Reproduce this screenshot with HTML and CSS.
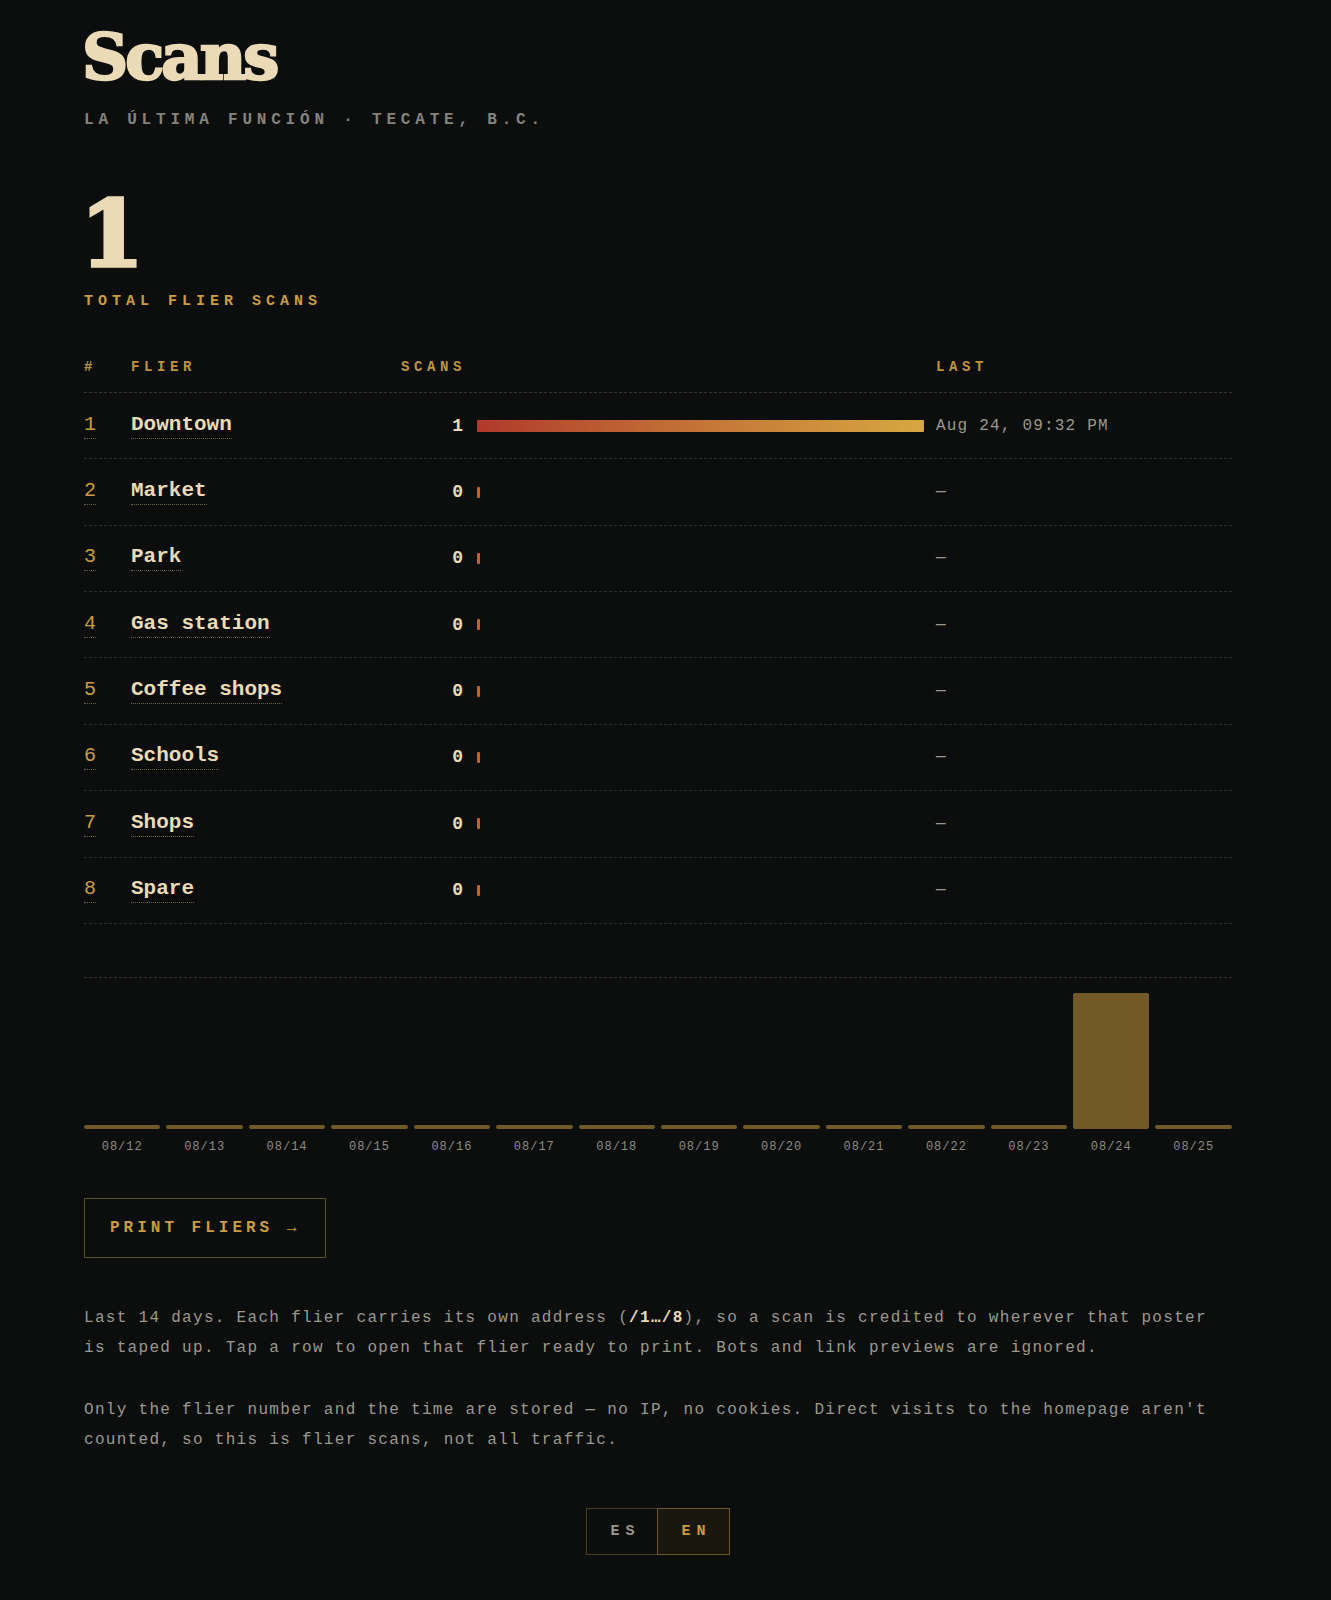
FILE: index.html
```html
<!DOCTYPE html>
<html lang="en">
<head>
<meta charset="utf-8">
<title>Scans</title>
<link rel="stylesheet" href="styles.css">
</head>
<body>
<main class="page">
  <h1 class="title">Scans</h1>
  <p class="subtitle">LA ÚLTIMA FUNCIÓN · TECATE, B.C.</p>

  <section class="total">
    <div class="total-num">1</div>
    <div class="total-label">TOTAL FLIER SCANS</div>
  </section>

  <section class="table">
    <div class="thead">
      <div>#</div>
      <div>FLIER</div>
      <div class="th-scans">SCANS</div>
      <div>LAST</div>
    </div>

    <div class="row">
      <div><span class="idx">1</span></div>
      <div><span class="name">Downtown</span></div>
      <div class="count">1</div>
      <div class="bar-cell"><div class="bar" style="width:100%"></div></div>
      <div class="last">Aug 24, 09:32 PM</div>
    </div>
    <div class="row">
      <div><span class="idx">2</span></div>
      <div><span class="name">Market</span></div>
      <div class="count">0</div>
      <div class="bar-cell"><div class="bar zero"></div></div>
      <div class="last">—</div>
    </div>
    <div class="row">
      <div><span class="idx">3</span></div>
      <div><span class="name">Park</span></div>
      <div class="count">0</div>
      <div class="bar-cell"><div class="bar zero"></div></div>
      <div class="last">—</div>
    </div>
    <div class="row">
      <div><span class="idx">4</span></div>
      <div><span class="name">Gas station</span></div>
      <div class="count">0</div>
      <div class="bar-cell"><div class="bar zero"></div></div>
      <div class="last">—</div>
    </div>
    <div class="row">
      <div><span class="idx">5</span></div>
      <div><span class="name">Coffee shops</span></div>
      <div class="count">0</div>
      <div class="bar-cell"><div class="bar zero"></div></div>
      <div class="last">—</div>
    </div>
    <div class="row">
      <div><span class="idx">6</span></div>
      <div><span class="name">Schools</span></div>
      <div class="count">0</div>
      <div class="bar-cell"><div class="bar zero"></div></div>
      <div class="last">—</div>
    </div>
    <div class="row">
      <div><span class="idx">7</span></div>
      <div><span class="name">Shops</span></div>
      <div class="count">0</div>
      <div class="bar-cell"><div class="bar zero"></div></div>
      <div class="last">—</div>
    </div>
    <div class="row">
      <div><span class="idx">8</span></div>
      <div><span class="name">Spare</span></div>
      <div class="count">0</div>
      <div class="bar-cell"><div class="bar zero"></div></div>
      <div class="last">—</div>
    </div>
  </section>

  <section class="chart">
    <div class="day"><div class="day-area"><div class="day-bar"></div></div><div class="day-label">08/12</div></div>
    <div class="day"><div class="day-area"><div class="day-bar"></div></div><div class="day-label">08/13</div></div>
    <div class="day"><div class="day-area"><div class="day-bar"></div></div><div class="day-label">08/14</div></div>
    <div class="day"><div class="day-area"><div class="day-bar"></div></div><div class="day-label">08/15</div></div>
    <div class="day"><div class="day-area"><div class="day-bar"></div></div><div class="day-label">08/16</div></div>
    <div class="day"><div class="day-area"><div class="day-bar"></div></div><div class="day-label">08/17</div></div>
    <div class="day"><div class="day-area"><div class="day-bar"></div></div><div class="day-label">08/18</div></div>
    <div class="day"><div class="day-area"><div class="day-bar"></div></div><div class="day-label">08/19</div></div>
    <div class="day"><div class="day-area"><div class="day-bar"></div></div><div class="day-label">08/20</div></div>
    <div class="day"><div class="day-area"><div class="day-bar"></div></div><div class="day-label">08/21</div></div>
    <div class="day"><div class="day-area"><div class="day-bar"></div></div><div class="day-label">08/22</div></div>
    <div class="day"><div class="day-area"><div class="day-bar"></div></div><div class="day-label">08/23</div></div>
    <div class="day"><div class="day-area"><div class="day-bar" style="height:100%"></div></div><div class="day-label">08/24</div></div>
    <div class="day"><div class="day-area"><div class="day-bar"></div></div><div class="day-label">08/25</div></div>
  </section>

  <a class="print-btn" href="#">PRINT FLIERS →</a>

  <p class="note note-first">Last 14 days. Each flier carries its own address (<b class="path">/1…/8</b>), so a scan is credited to wherever that poster is taped up. Tap a row to open that flier ready to print. Bots and link previews are ignored.</p>
  <p class="note">Only the flier number and the time are stored — no IP, no cookies. Direct visits to the homepage aren't counted, so this is flier scans, not all traffic.</p>

  <div class="lang-wrap">
    <div class="lang">
      <span class="lang-btn">ES</span>
      <span class="lang-btn active">EN</span>
    </div>
  </div>
</main>
</body>
</html>
```

FILE: styles.css
```css
* { box-sizing: border-box; }

html, body {
  margin: 0;
  background: #0c0e0d;
}

body {
  padding: 25px 15px 40px 0;
  font-family: "Liberation Mono", "DejaVu Sans Mono", monospace;
  color: #9b988f;
}

.page {
  width: 1148px;
  margin: 0 auto;
}

.title {
  margin: 0 0 0 -2px;
  font-family: "DejaVu Serif", serif;
  font-weight: bold;
  font-size: 64px;
  line-height: 64px;
  letter-spacing: -3px;
  color: #eadbb6;
  -webkit-text-stroke: 2.4px #eadbb6;
}

.subtitle {
  margin: 21px 0 0;
  font-size: 16px;
  font-weight: bold;
  line-height: 20px;
  letter-spacing: 4.8px;
  color: #85837c;
}

.total {
  margin-top: 54px;
}

.total-num {
  font-family: "DejaVu Serif", serif;
  font-weight: bold;
  font-size: 92px;
  line-height: 100px;
  color: #eadbb6;
  -webkit-text-stroke: 3.4px #eadbb6;
  margin-left: -4px;
}

.total-label {
  margin-top: 8px;
  font-size: 15px;
  font-weight: bold;
  line-height: 20px;
  letter-spacing: 5px;
  color: #c99c42;
}

.table {
  margin-top: 45px;
}

.thead,
.row {
  display: grid;
  grid-template-columns: 47px 270px 62px 1fr 296px;
  align-items: center;
}

.thead {
  padding-bottom: 15px;
  border-bottom: 1px dashed #34332e;
  font-size: 14px;
  font-weight: bold;
  line-height: 20px;
  letter-spacing: 4.6px;
  color: #bf9441;
}

.thead .th-scans {
  grid-column: 3 / 5;
}

.row {
  height: 66.36px;
  border-bottom: 1px dashed #2c2c28;
}

.idx {
  display: inline-block;
  font-size: 20px;
  line-height: 24px;
  padding-bottom: 1px;
  border-bottom: 1px dotted #6a5f45;
  color: #c99c42;
}

.name {
  display: inline-block;
  font-size: 21px;
  font-weight: bold;
  line-height: 24px;
  padding-bottom: 1px;
  border-bottom: 1px dotted #6a5f45;
  color: #eadbb6;
}

.count {
  text-align: right;
  font-size: 18px;
  font-weight: bold;
  color: #eadbb6;
}

.bar-cell {
  padding: 0 12px 0 14px;
}

.bar {
  height: 12px;
  border-radius: 1px;
  background: linear-gradient(90deg, #b03a2c 0%, #c06a35 40%, #d7a842 100%);
}

.bar.zero {
  width: 3px;
  height: 11px;
  background: #c2632e;
}

.last {
  font-size: 16px;
  letter-spacing: 1.2px;
  color: #9b988f;
}

.chart {
  margin-top: 53px;
  padding-top: 15px;
  border-top: 1px dashed #34332e;
  display: flex;
  gap: 6px;
}

.day {
  flex: 1;
  display: flex;
  flex-direction: column;
}

.day-area {
  height: 136px;
  display: flex;
  align-items: flex-end;
}

.day-bar {
  width: 100%;
  height: 4px;
  border-radius: 2px;
  background: #715a28;
}

.day-label {
  margin-top: 11px;
  font-size: 12px;
  line-height: 14px;
  letter-spacing: 1px;
  text-align: center;
  color: #8d8b84;
}

.print-btn {
  display: inline-block;
  margin-top: 44px;
  padding: 19px 25px;
  border: 1px solid #5f4d27;
  font-size: 16px;
  font-weight: bold;
  line-height: 20px;
  letter-spacing: 4px;
  color: #c99c42;
  text-decoration: none;
}

.note {
  margin: 30.6px 0 0;
  font-size: 16px;
  line-height: 30.6px;
  letter-spacing: 1.3px;
  color: #9b988f;
}

.note-first {
  margin-top: 45px;
}

.note .path {
  font-weight: bold;
  color: #eadbb6;
}

.lang-wrap {
  margin-top: 52px;
  display: flex;
  justify-content: center;
}

.lang {
  display: flex;
  border: 1px solid #4a3d1f;
}

.lang-btn {
  width: 71px;
  height: 45px;
  display: flex;
  align-items: center;
  justify-content: center;
  padding-left: 6px;
  font-size: 15px;
  font-weight: bold;
  letter-spacing: 6px;
  color: #9b988f;
}

.lang-btn.active {
  background: #1a170f;
  outline: 1px solid #6b5628;
  color: #c99c42;
}
```
